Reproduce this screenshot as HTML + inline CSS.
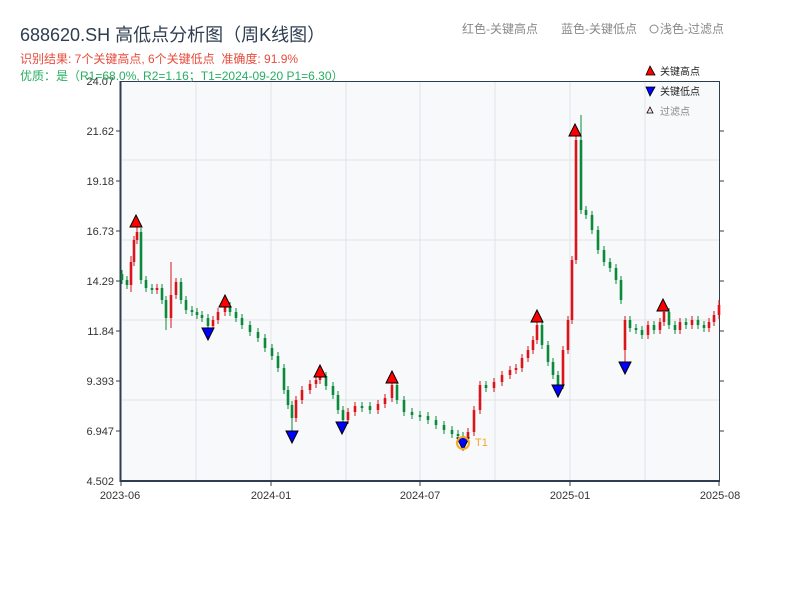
<!DOCTYPE html>
<html><head><meta charset="utf-8"><style>
body{margin:0;background:#fff;width:800px;height:600px;overflow:hidden;font-family:"Liberation Sans","Noto Sans CJK SC",sans-serif}
</style></head><body>
<svg width="800" height="600" xmlns="http://www.w3.org/2000/svg" font-family="Liberation Sans, Noto Sans CJK SC, sans-serif">
<rect x="120" y="81" width="600" height="400" fill="#f7f9fb"/>
<g stroke="#e0e3e8" stroke-width="1">
<line x1="120" y1="160" x2="720" y2="160"/><line x1="120" y1="240" x2="720" y2="240"/><line x1="120" y1="320" x2="720" y2="320"/><line x1="120" y1="400" x2="720" y2="400"/>
<line x1="196" y1="81" x2="196" y2="481"/><line x1="271" y1="81" x2="271" y2="481"/><line x1="346" y1="81" x2="346" y2="481"/><line x1="420" y1="81" x2="420" y2="481"/><line x1="495" y1="81" x2="495" y2="481"/><line x1="570" y1="81" x2="570" y2="481"/><line x1="645" y1="81" x2="645" y2="481"/>
</g>
<rect x="120.5" y="81.5" width="599" height="399" fill="none" stroke="#2e3d50" stroke-width="1"/>
<line x1="120.5" y1="81" x2="120.5" y2="482" stroke="#2e3d50" stroke-width="2"/>
<line x1="120" y1="481" x2="720" y2="481" stroke="#2e3d50" stroke-width="2"/>

<path fill="none" stroke="#0a8a3a" stroke-width="1" d="M122 270V284M127 276V289M141 228V284M146 276V292M152 284V294M162 284V304M166 296V330M181 278V304M186 296V314M192 306V316M197 308V319M202 311V322M208 314V330M230 302V316M236 308V322M242 314V329M250 321V336M258 328V342M265 334V352M272 344V360M278 352V372M284 364V394M288 386V409M292 401V432M326 372V390M333 382V399M338 391V414M343 406V424M362 402V412M370 402V414M397 381V404M404 396V416M412 408V419M420 411V421M428 412V424M436 416V429M444 421V434M452 426V438M458 430V440M463 432V442M486 381V392M542 321V349M548 341V366M553 358V379M558 371V388M581 115V214M586 206V219M592 211V234M598 226V254M604 246V266M610 258V272M616 264V284M621 276V304M630 316V332M636 324V334M642 326V339M654 321V334M669 308V329M675 321V334M686 318V329M698 316V329M704 321V332"/>
<path fill="none" stroke="#0a8a3a" stroke-width="2.6" d="M122 274V280M127 280V285M141 232V280M146 280V288M152 288V290M162 288V300M166 300V318M181 282V300M186 300V310M192 310V312M197 312V315M202 315V318M208 318V326M230 306V312M236 312V318M242 318V325M250 325V332M258 332V338M265 338V348M272 348V356M278 356V368M284 368V390M288 390V405M292 405V418M326 376V386M333 386V395M338 395V410M343 410V420M362 406V408M370 406V410M397 385V400M404 400V412M412 412V415M420 415V417M428 416V420M436 420V425M444 425V430M452 430V434M458 434V436M463 436V438M486 385V388M542 325V345M548 345V362M553 362V375M558 375V385M581 140V210M586 210V215M592 215V230M598 230V250M604 250V262M610 262V268M616 268V280M621 280V300M630 320V328M636 328V330M642 330V335M654 325V330M669 312V325M675 325V330M686 322V325M698 320V325M704 325V328"/>
<path fill="none" stroke="#d9141b" stroke-width="1" d="M131 256V292M134 236V266M137 226V244M157 284V294M171 262V328M176 278V299M213 316V330M218 308V324M225 302V316M296 396V422M302 386V404M310 380V394M316 376V388M320 372V384M348 408V424M355 402V416M378 400V414M385 394V408M392 381V402M468 428V442M474 406V436M480 381V414M494 378V392M502 371V386M510 366V379M516 364V374M522 354V372M528 346V362M533 336V354M537 321V344M563 346V389M568 316V354M572 256V324M576 131V264M625 316V366M648 321V339M660 318V334M664 308V326M680 318V334M692 316V329M709 318V332M714 311V326M719 300V319"/>
<path fill="none" stroke="#d9141b" stroke-width="2.6" d="M131 262V285M134 240V262M137 232V240M157 288V290M171 295V318M176 282V295M213 320V326M218 312V320M225 306V312M296 400V418M302 390V400M310 384V390M316 380V384M320 376V380M348 412V420M355 406V412M378 404V410M385 398V404M392 385V398M468 432V438M474 410V432M480 385V410M494 382V388M502 375V382M510 370V375M516 368V370M522 358V368M528 350V358M533 340V350M537 325V340M563 350V385M568 320V350M572 260V320M576 140V260M625 320V350M648 325V335M660 322V330M664 312V322M680 322V330M692 320V325M709 322V328M714 315V322M719 305V315"/>

<g fill="red" stroke="#000" stroke-width="1">
<polygon points="136,215 130,227 142,227"/><polygon points="225,295 219,307 231,307"/><polygon points="320,365 314,377 326,377"/><polygon points="392,371 386,383 398,383"/><polygon points="537,310 531,322 543,322"/><polygon points="575,124 569,136 581,136"/><polygon points="663,299 657,311 669,311"/>
</g>
<g fill="blue" stroke="#000" stroke-width="1">
<polygon points="202,328 214,328 208,340"/><polygon points="286,431 298,431 292,443"/><polygon points="336,422 348,422 342,434"/><polygon points="457,438 469,438 463,450"/><polygon points="552,385 564,385 558,397"/><polygon points="619,362 631,362 625,374"/>
</g>
<circle cx="463" cy="443" r="6" fill="none" stroke="#f5a623" stroke-width="2"/><text x="475" y="446" font-size="11" fill="#f5a623">T1</text>

<g font-size="11" fill="#333" text-anchor="end">
<text x="114" y="85">24.07</text><text x="114" y="135">21.62</text><text x="114" y="185">19.18</text><text x="114" y="235">16.73</text><text x="114" y="285">14.29</text><text x="114" y="335">11.84</text><text x="114" y="385">9.393</text><text x="114" y="435">6.947</text><text x="114" y="485">4.502</text>
</g>
<g stroke="#2e3d50"><line x1="116" y1="131" x2="120" y2="131"/><line x1="116" y1="181" x2="120" y2="181"/><line x1="116" y1="231" x2="120" y2="231"/><line x1="116" y1="281" x2="120" y2="281"/><line x1="116" y1="331" x2="120" y2="331"/><line x1="116" y1="381" x2="120" y2="381"/><line x1="116" y1="431" x2="120" y2="431"/>
<line x1="720" y1="131" x2="724" y2="131"/><line x1="720" y1="181" x2="724" y2="181"/><line x1="720" y1="231" x2="724" y2="231"/><line x1="720" y1="281" x2="724" y2="281"/><line x1="720" y1="331" x2="724" y2="331"/><line x1="720" y1="381" x2="724" y2="381"/><line x1="720" y1="431" x2="724" y2="431"/>
<line x1="121" y1="481" x2="121" y2="486"/><line x1="271" y1="481" x2="271" y2="486"/><line x1="420" y1="481" x2="420" y2="486"/><line x1="570" y1="481" x2="570" y2="486"/><line x1="719" y1="481" x2="719" y2="486"/></g>
<g font-size="11" fill="#333" text-anchor="middle">
<text x="120" y="499">2023-06</text><text x="271" y="499">2024-01</text><text x="420" y="499">2024-07</text><text x="570" y="499">2025-01</text><text x="720" y="499">2025-08</text>
</g>
<text x="20" y="41" font-size="18" fill="#2e3d50">688620.SH 高低点分析图（周K线图）</text>
<text x="20" y="63" font-size="12" fill="#e84b3c" xml:space="preserve">识别结果: 7个关键高点, 6个关键低点  准确度: 91.9%</text>
<text x="20" y="80" font-size="12" fill="#27ae60">优质：是（R1=68.0%, R2=1.16；T1=2024-09-20 P1=6.30）</text>
<text x="462" y="33" font-size="12" fill="#888">红色-关键高点</text>
<text x="561" y="33" font-size="12" fill="#888">蓝色-关键低点</text>
<circle cx="654" cy="29" r="4" fill="none" stroke="#888"/>
<text x="660" y="33" font-size="12" fill="#888">浅色-过滤点</text>
<polygon points="650,66 646,75 655,75" fill="red" stroke="#000" stroke-width="0.8"/>
<text x="660" y="75" font-size="10" fill="#222">关键高点</text>
<polygon points="646,87 655,87 650,96" fill="blue" stroke="#000" stroke-width="0.8"/>
<text x="660" y="95" font-size="10" fill="#222">关键低点</text>
<polygon points="650,107 647,113 653,113" fill="#fdd" stroke="#000" stroke-width="0.8"/>
<text x="660" y="115" font-size="10" fill="#888">过滤点</text>
</svg>
</body></html>
